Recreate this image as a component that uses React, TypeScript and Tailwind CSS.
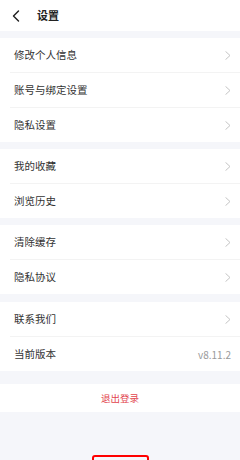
import { ChevronLeft } from 'lucide-react';

type Item = { label: string; value?: string };

const groups: Item[][] = [
    [{ label: '修改个人信息' }, { label: '账号与绑定设置' }, { label: '隐私设置' }],
    [{ label: '我的收藏' }, { label: '浏览历史' }],
    [{ label: '清除缓存' }, { label: '隐私协议' }],
    [{ label: '联系我们' }, { label: '当前版本', value: 'v8.11.2' }],
];

const gaps = ['mt-[7px]', 'mt-[7px]', 'mt-[7px]', 'mt-[8px]'];

const Arrow = () => (
    <svg width="6" height="9" viewBox="0 0 6 9" fill="none" className="text-[#c4c4c4]">
        <path d="M0.8 0.6 L5 4.5 L0.8 8.4" stroke="currentColor" strokeWidth="1" strokeLinecap="round" strokeLinejoin="round" />
    </svg>
);

const Row = ({ item, last }: { item: Item; last: boolean }) => (
    <div>
        <div className="h-[34px] flex items-center justify-between pl-[14px] pr-[9px]">
            <span className="text-[10.5px] text-[#333333]">{item.label}</span>
            {item.value ? <span className="text-[10px] text-[#9a9a9a]">{item.value}</span> : <Arrow />}
        </div>
        {!last && <div className="ml-[10px] h-px bg-[#f3f3f3]" />}
    </div>
);

const App = () => {
    return (
        <div
            className="min-h-screen bg-[#f5f6fa] overflow-hidden"
            style={{ fontFamily: '"Noto Sans CJK SC", "Noto Sans", sans-serif' }}
        >
            <div className="h-[31px] bg-white flex items-center">
                <ChevronLeft className="ml-[6px] w-[20px] h-[20px] text-[#222222]" strokeWidth={1.7} />
                <span className="ml-[11px] text-[11px] font-bold text-[#222222]">设置</span>
            </div>

            {groups.map((group, i) => (
                <div key={i} className={`${gaps[i]} bg-white`}>
                    {group.map((item, j) => (
                        <Row key={item.label} item={item} last={j === group.length - 1} />
                    ))}
                </div>
            ))}

            <div className="mt-[13px] h-[28px] bg-white flex items-center justify-center">
                <span className="text-[9.5px] text-[#e2444d]">退出登录</span>
            </div>

            <div className="mt-[43px] mx-auto w-[57px] h-[24px] border-2 border-[#ff0000] rounded-[3px]" />
        </div>
    );
};

export default App;
